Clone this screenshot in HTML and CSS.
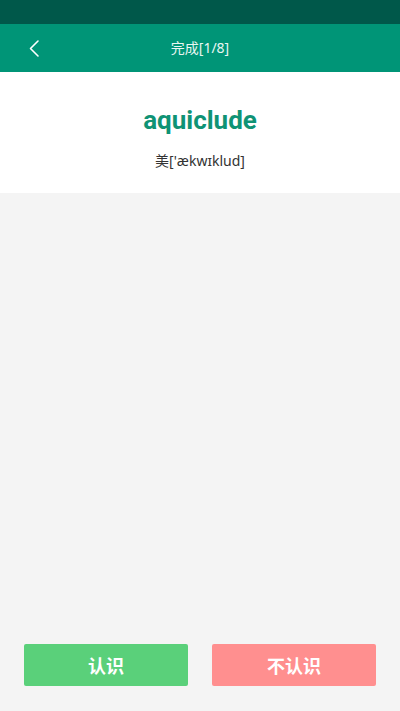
FILE: index.html
```html
<!DOCTYPE html>
<html>
<head>
<meta charset="utf-8">
<link rel="stylesheet" href="styles.css">
</head>
<body>
<div class="app">
  <div class="statusbar"></div>
  <div class="header">
    <div class="back">
      <svg width="16" height="20" viewBox="0 0 16 20"><path d="M10 3 L2.5 10.5 L10 18" fill="none" stroke="#ffffff" stroke-width="1.6" stroke-linecap="round" stroke-linejoin="round"/></svg>
    </div>
    <div class="title">完成[1/8]</div>
    <div class="spacer"></div>
  </div>
  <div class="word-card">
    <div class="word">aquiclude</div>
    <div class="phonetic">美['ækwɪklud]</div>
  </div>
  <div class="content"></div>
  <div class="actions">
    <div class="btn btn-know">认识</div>
    <div class="btn btn-unknown">不认识</div>
  </div>
</div>
</body>
</html>
```

FILE: styles.css
```css
html, body {
  margin: 0;
  padding: 0;
}
body {
  width: 400px;
  height: 711px;
  background: #f4f4f4;
  font-family: Roboto, "Noto Sans CJK SC", sans-serif;
  overflow: hidden;
}
.app {
  display: flex;
  flex-direction: column;
  height: 711px;
}
.statusbar {
  height: 24px;
  background: #00584a;
}
.header {
  height: 48px;
  background: #009577;
  display: flex;
  align-items: center;
  color: #ffffff;
}
.back {
  width: 56px;
  padding-left: 28px;
  box-sizing: border-box;
  display: flex;
  align-items: center;
  height: 48px;
}
.title {
  flex: 1;
  text-align: center;
  font-size: 14px;
  line-height: 20px;
  margin-top: -1px;
  font-family: "Noto Sans", "Noto Sans CJK SC", sans-serif;
  color: #e9f6f2;
}
.spacer {
  width: 56px;
}
.word-card {
  background: #ffffff;
  height: 121px;
  display: flex;
  flex-direction: column;
  align-items: center;
  box-sizing: border-box;
  padding-top: 31px;
}
.word {
  font-size: 26px;
  font-weight: bold;
  color: #0f9375;
  line-height: 34px;
}
.phonetic {
  margin-top: 14px;
  font-size: 14px;
  font-family: "Noto Sans", "Noto Sans CJK SC", sans-serif;
  color: #333333;
  line-height: 20px;
}
.content {
  flex: 1;
}
.actions {
  display: flex;
  justify-content: space-between;
  padding: 0 24px 25px 24px;
}
.btn {
  width: 164px;
  height: 42px;
  border-radius: 2px;
  display: flex;
  align-items: center;
  justify-content: center;
  color: #ffffff;
  font-size: 18px;
  font-weight: bold;
}
.btn-know {
  background: #5ad07a;
}
.btn-unknown {
  background: #ff8f8f;
}
```
